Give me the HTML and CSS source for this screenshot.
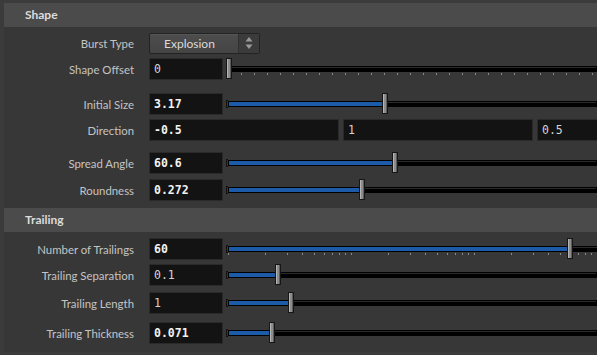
FILE: index.html
```html
<!DOCTYPE html>
<html lang="en">
<head>
    <meta charset="UTF-8">
    <title>Parameters</title>
    <link rel="stylesheet" href="styles.css">
</head>
<body>
    <div class="panel">

        <!-- Shape folder -->
        <div class="section-head">Shape</div>
        <div class="section-body shape-body">
            <div class="row">
                <span class="lbl">Burst Type</span>
                <div class="menu">
                    <span class="menu-text">Explosion</span>
                    <span class="menu-arrows">
                        <svg width="8" height="12" viewBox="0 0 8 12"><path d="M4 0L7.5 4.5H0.5Z M4 12L7.5 7.5H0.5Z" fill="#9a9a9a"/></svg>
                    </span>
                </div>
            </div>
            <div class="row">
                <span class="lbl">Shape Offset</span>
                <div class="field">0</div>
                <div class="slider">
                    <span class="cap"></span>
                    <div class="track"></div>
                    <div class="ticks ticks-linear"></div>
                    <div class="handle" style="left:-2px"></div>
                </div>
            </div>
            <div class="row gap-9">
                <span class="lbl">Initial Size</span>
                <div class="field bold">3.17</div>
                <div class="slider">
                    <span class="cap"></span>
                    <div class="track"><div class="fill" style="width:156px"></div></div>
                    <div class="handle" style="left:154px"></div>
                </div>
            </div>
            <div class="row">
                <span class="lbl">Direction</span>
                <div class="vector">
                    <div class="field wide bold">-0.5</div>
                    <div class="field wide">1</div>
                    <div class="field wide">0.5</div>
                </div>
            </div>
            <div class="row gap-7">
                <span class="lbl">Spread Angle</span>
                <div class="field bold">60.6</div>
                <div class="slider">
                    <span class="cap"></span>
                    <div class="track"><div class="fill" style="width:166px"></div></div>
                    <div class="handle" style="left:164px"></div>
                </div>
            </div>
            <div class="row gap-1">
                <span class="lbl">Roundness</span>
                <div class="field bold">0.272</div>
                <div class="slider">
                    <span class="cap"></span>
                    <div class="track"><div class="fill" style="width:133px"></div></div>
                    <div class="handle" style="left:131px"></div>
                </div>
            </div>
        </div>

        <!-- Trailing folder -->
        <div class="section-head">Trailing</div>
        <div class="section-body trail-body">
            <div class="row">
                <span class="lbl">Number of Trailings</span>
                <div class="field bold">60</div>
                <div class="slider">
                    <span class="cap"></span>
                    <div class="track"><div class="fill" style="width:341px"></div></div>
                    <svg class="ticks" width="380" height="2">
                        <path d="M0.5 0v2M37.5 0v2M59.5 0v2M74.5 0v2M86.5 0v2M96.5 0v2M104.5 0v2M111.5 0v2M117.5 0v2M123.5 0v2M160.5 0v2M182.5 0v2M197.5 0v2M209.5 0v2M219.5 0v2M227.5 0v2M234.5 0v2M240.5 0v2M246.5 0v2M283.5 0v2M305.5 0v2M320.5 0v2M332.5 0v2M342.5 0v2M350.5 0v2M357.5 0v2M363.5 0v2M369.5 0v2" stroke="#8a8a8a" stroke-width="1"/>
                    </svg>
                    <div class="handle" style="left:339px"></div>
                </div>
            </div>
            <div class="row">
                <span class="lbl">Trailing Separation</span>
                <div class="field">0.1</div>
                <div class="slider">
                    <span class="cap"></span>
                    <div class="track"><div class="fill" style="width:49px"></div></div>
                    <div class="handle" style="left:47px"></div>
                </div>
            </div>
            <div class="row gap-2">
                <span class="lbl">Trailing Length</span>
                <div class="field">1</div>
                <div class="slider">
                    <span class="cap"></span>
                    <div class="track"><div class="fill" style="width:62px"></div></div>
                    <div class="handle" style="left:60px"></div>
                </div>
            </div>
            <div class="row gap-4">
                <span class="lbl">Trailing Thickness</span>
                <div class="field bold">0.071</div>
                <div class="slider">
                    <span class="cap"></span>
                    <div class="track"><div class="fill" style="width:43px"></div></div>
                    <div class="handle" style="left:41px"></div>
                </div>
            </div>
        </div>

    </div>
</body>
</html>
```

FILE: styles.css
```css
html, body {
    margin: 0;
    height: 100%;
    background-color: #3b3b3b;
    overflow: hidden;
}

.panel {
    padding: 3px 0 0 4px;
    font-family: Lato, "Liberation Sans", sans-serif;
    font-size: 11.4px;
    color: #c4c4c4;
}

.section-head {
    height: 24px;
    line-height: 24px;
    padding-left: 21px;
    background-color: #4b4b4b;
    color: #dcdcdc;
    font-size: 12px;
    font-weight: bold;
}

.section-body {
    background-color: #373737;
}
.shape-body {
    padding: 3px 0 5px 0;
}
.trail-body {
    padding: 4px 0 6px 0;
}

.row {
    display: flex;
    align-items: center;
    height: 26px;
}
.gap-1 { margin-top: 1px; }
.gap-2 { margin-top: 2px; }
.gap-4 { margin-top: 4px; }
.gap-7 { margin-top: 7px; }
.gap-9 { margin-top: 9px; }

.lbl {
    width: 130px;
    flex-shrink: 0;
    text-align: right;
    margin-right: 15px;
    white-space: nowrap;
}

/* menu button */
.menu {
    display: flex;
    width: 111px;
    height: 21px;
    box-sizing: border-box;
    border: 1px solid #232323;
    border-radius: 2px;
    background: linear-gradient(#4d4d4d, #444444);
    box-shadow: inset 0 1px 0 #565656;
    color: #dadada;
    font-size: 12px;
}
.menu-text {
    flex: 1;
    padding-left: 14px;
    line-height: 19px;
}
.menu-arrows {
    width: 20px;
    display: flex;
    align-items: center;
    justify-content: center;
    background-color: #3b3b3b;
    border-left: 1px solid #303030;
}

/* number fields */
.field {
    width: 74px;
    height: 22px;
    flex-shrink: 0;
    box-sizing: border-box;
    border: 1px solid #2a2a2a;
    background-color: #131313;
    padding-left: 4px;
    font-family: "DejaVu Sans Mono", monospace;
    font-size: 11.5px;
    line-height: 20px;
    color: #d4d4d4;
}
.field.bold {
    font-weight: bold;
    color: #f2f2f2;
}
.field.wide {
    width: 190px;
}
.vector {
    display: flex;
    gap: 4px;
}

/* sliders */
.slider {
    position: relative;
    flex: 1;
    height: 22px;
    margin-left: 5px;
    padding-top: 8px;
    box-sizing: border-box;
}
.track {
    height: 6px;
    box-sizing: border-box;
    border: 1px solid #000;
    background: linear-gradient(#2a2a2a 0 1px, #000 1px);
}
.fill {
    height: 4px;
    background-color: #1c5ba8;
}
.cap {
    position: absolute;
    left: -2px;
    top: 7px;
    width: 1px;
    height: 6px;
    border: 1px solid #111;
    border-right: none;
}
.ticks {
    display: block;
    height: 2px;
    margin-top: 1px;
}
.ticks-linear {
    background: repeating-linear-gradient(to right, #8a8a8a 0 1px, transparent 1px 13px);
}
.handle {
    position: absolute;
    top: 0;
    width: 6px;
    height: 21px;
    box-sizing: border-box;
    border: 1px solid #161616;
    background: linear-gradient(to right, #b4b4b4 0 1px, #8c8c8c 1px 3px, #5c5c5c 3px);
}
```
